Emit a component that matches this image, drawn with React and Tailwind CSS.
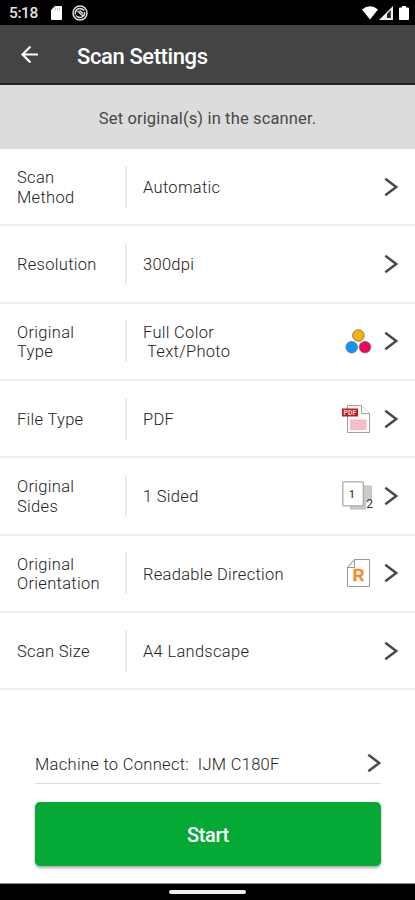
function Chevron() {
  return (
    <svg width="14" height="20" viewBox="0 0 14 20" fill="none" stroke="#4a4a4a" strokeWidth="2.5" className="shrink-0">
      <path d="M1.3 1.8 L12.2 10 L1.3 18.2" />
    </svg>
  );
}

function ColorIcon() {
  return (
    <svg width="32" height="32" viewBox="0 0 32 32" stroke="#777" strokeWidth="0.9">
      <circle cx="17.4" cy="10.5" r="5.8" fill="#f9b000" />
      <circle cx="10.7" cy="22.2" r="5.8" fill="#0a96f5" />
      <circle cx="24" cy="22.2" r="5.8" fill="#f4005f" />
    </svg>
  );
}

function PdfIcon() {
  return (
    <svg width="32" height="32" viewBox="0 0 32 32">
      <path d="M6.5 2.5 H20.5 L28.5 10.5 V29.5 H6.5 Z" fill="#fff" stroke="#9da3a0" />
      <path d="M20.5 2.5 V10.5 H28.5" fill="#fff" stroke="#9da3a0" />
      <rect x="9" y="16.5" width="16.5" height="10.5" fill="#f3b9c1" />
      <path d="M9 19 H25.5 M9 22 H25.5 M9 25 H25.5" stroke="#f6c6cd" />
      <rect x="1" y="5.5" width="16" height="8" fill="#c9171e" />
      <text x="9" y="12" fill="#f8dcdc" fontSize="7" fontWeight="700" textAnchor="middle" letterSpacing="0" fontFamily="Roboto, sans-serif">PDF</text>
    </svg>
  );
}

function SidesIcon() {
  return (
    <svg width="32" height="32" viewBox="0 0 32 32" fontFamily="Roboto, sans-serif" letterSpacing="0">
      <path d="M9.5 6 H30.5 V19 L24 29 H9.5 Z" fill="#cacaca" stroke="#b8b8b8" />
      <path d="M25 18.5 H32 V30 H25 Z" fill="#fff" />
      <path d="M25 6 H30.5 V19 L25 23 Z" fill="#cacaca" />
      <rect x="1.8" y="1.8" width="20.5" height="24" rx="1" fill="#fff" stroke="#aaa" strokeWidth="1.3" />
      <text x="11" y="17.5" fill="#444" fontSize="11" fontWeight="500" textAnchor="middle">1</text>
      <text x="28.6" y="28.3" fill="#333" fontSize="12" fontWeight="400" textAnchor="middle">2</text>
    </svg>
  );
}

function OrientationIcon() {
  return (
    <svg width="32" height="32" viewBox="0 0 32 32">
      <path d="M13.5 2.5 H28.5 V29.5 H6.5 V10.5 Z" fill="#fff" stroke="#999" />
      <path d="M13.5 2.5 V10.5 H6.5 Z" fill="#f4f4f4" stroke="#999" />
      <text x="17.6" y="23.6" fill="#f58a1f" stroke="#f58a1f" strokeWidth="0.4" fontSize="16" fontWeight="700" textAnchor="middle" letterSpacing="0" fontFamily="'Liberation Sans', sans-serif">R</text>
    </svg>
  );
}

const rows = [
  { label: ["Scan", "Method"], value: ["Automatic"] },
  { label: ["Resolution"], value: ["300dpi"] },
  { label: ["Original", "Type"], value: ["Full Color", " Text/Photo"], Icon: ColorIcon },
  { label: ["File Type"], value: ["PDF"], Icon: PdfIcon },
  { label: ["Original", "Sides"], value: ["1 Sided"], Icon: SidesIcon },
  { label: ["Original", "Orientation"], value: ["Readable Direction"], Icon: OrientationIcon },
  { label: ["Scan Size"], value: ["A4 Landscape"] },
];

function Lines({ lines }) {
  return lines.map((line) => (
    <div key={line} className="whitespace-pre">{line}</div>
  ));
}

function SettingRow({ label, value, Icon }) {
  return (
    <div className="flex h-[77.33px] items-center border-b-2 border-[#ececec] pr-[17px] pl-[17px]">
      <div className="w-[108px] shrink-0 pt-[2px]"><Lines lines={label} /></div>
      <div className="h-[42px] w-[2px] shrink-0 bg-[#ececec]" />
      <div className="flex-1 pt-[2px] pl-4"><Lines lines={value} /></div>
      {Icon && <div className="mr-[11px]"><Icon /></div>}
      <Chevron />
    </div>
  );
}

function StatusBar() {
  return (
    <div className="flex h-[25px] items-center bg-black pr-[6px] pl-[9px] text-white">
      <span className="w-[42px] pt-[2px] text-[15.5px] leading-none font-medium tracking-[-0.4px] text-[#e0e0e0]">5:18</span>
      <svg width="11" height="14" viewBox="0 0 11 14" fill="#fff">
        <path d="M4 0 H10 Q11 0 11 1 V13 Q11 14 10 14 H1 Q0 14 0 13 V4 Z" />
        <path d="M4.5 2 V4.5 M6.5 2 V4.5 M8.5 2 V4.5" stroke="#aaa" strokeWidth="0.7" />
      </svg>
      <svg width="16" height="16" viewBox="0 0 16 16" fill="none" stroke="#dcdcdc" strokeWidth="1.5" className="ml-[10px]">
        <circle cx="8" cy="8" r="7" />
        <path d="M3.5 9.5 A4.6 4.6 0 0 1 10 4 L12.3 5.5 M12.5 7 A4.6 4.6 0 0 1 6 12 L3.8 10.5 M5.5 6 L11 11 M7.5 5.5 L11 8.5" />
      </svg>
      <div className="ml-auto flex items-center">
        <svg width="16" height="14" viewBox="0 0 16 14" fill="#fff"><path d="M0 3.5 Q8 -3 16 3.5 L8 13.5 Z" /></svg>
        <svg width="14" height="14" viewBox="0 0 14 14" className="ml-[1px]">
          <path d="M0 14 L14 0 V14 Z" fill="#eee" />
          <path d="M8 12 V8 L11.8 4 V12 Z" fill="#222" />
        </svg>
        <svg width="10" height="14" viewBox="0 0 10 14" fill="#fff" className="ml-[6px]"><path d="M3 0 H7 V1.5 H9 Q10 1.5 10 2.5 V13 Q10 14 9 14 H1 Q0 14 0 13 V2.5 Q0 1.5 1 1.5 H3 Z" /></svg>
      </div>
    </div>
  );
}

export default function App() {
  return (
    <div className="flex h-[900px] w-[415px] flex-col overflow-hidden bg-white font-['Roboto',sans-serif] text-[16.5px] leading-[19.5px] font-light tracking-[0.3px] text-[#222]">
      <StatusBar />
      <header className="flex h-[60px] items-center border-b-2 border-[#222] bg-[#444] pl-[21px] text-white">
        <svg width="18" height="18" viewBox="0 0 18 18" fill="none" stroke="#fff" strokeWidth="2.2">
          <path d="M17 9.5 H1.5 M9.5 1.5 L1.5 9.5 L9.5 17.5" />
        </svg>
        <h1 className="ml-[38px] pt-[5px] text-[22px] font-medium tracking-[-0.4px]">Scan Settings</h1>
      </header>
      <div className="flex h-[64px] items-center justify-center bg-[#dcdcdc] pt-[3px] font-normal tracking-[0.14px] text-[#484848]">Set original(s) in the scanner.</div>
      <main>
        {rows.map((row) => <SettingRow key={row.label.join(" ")} {...row} />)}
      </main>
      <footer className="flex flex-1 flex-col pr-[34px] pl-[35px] pt-[54px]">
        <div className="flex h-[40px] items-center justify-between border-b border-[#ddd] pb-[2px]">
          <span className="whitespace-pre pt-[3px]">{"Machine to Connect:  IJM C180F"}</span>
          <Chevron />
        </div>
        <button className="mt-[18px] h-[64px] rounded-[5px] bg-[#04a936] pt-[3px] text-[20px] font-medium tracking-[-0.4px] text-white shadow-[0_2px_3px_rgba(0,0,0,0.35)]">Start</button>
      </footer>
      <div className="flex h-[17px] shrink-0 items-center justify-center border-t border-[#888] bg-black">
        <div className="h-[4px] w-[77px] rounded-full bg-[#eee]" />
      </div>
    </div>
  );
}
